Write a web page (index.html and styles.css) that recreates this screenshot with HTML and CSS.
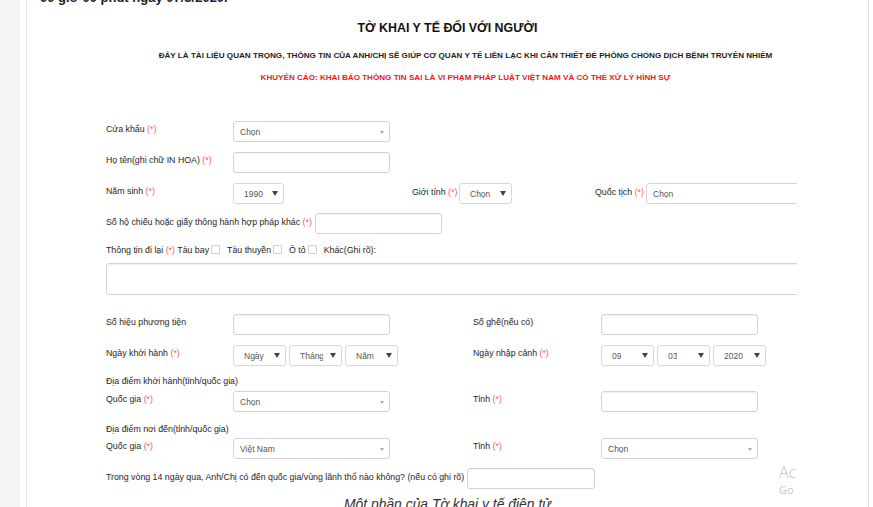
FILE: index.html
```html
<!DOCTYPE html>
<html lang="vi">
<head>
<meta charset="utf-8">
<title>Tờ khai y tế</title>
<link rel="stylesheet" href="styles.css">
</head>
<body>
<div class="page">
  <div class="gutter"></div>
  <div class="sheet">
    <div class="topline">00 giờ 00 phút ngày 07/3/2020.</div>
    <h1 class="title">TỜ KHAI Y TẾ ĐỐI VỚI NGƯỜI</h1>
    <p class="note">ĐÂY LÀ TÀI LIỆU QUAN TRỌNG, THÔNG TIN CỦA ANH/CHỊ SẼ GIÚP CƠ QUAN Y TẾ LIÊN LẠC KHI CẦN THIẾT ĐỂ PHÒNG CHỐNG DỊCH BỆNH TRUYỀN NHIỄM</p>
    <p class="note warn">KHUYẾN CÁO: KHAI BÁO THÔNG TIN SAI LÀ VI PHẠM PHÁP LUẬT VIỆT NAM VÀ CÓ THỂ XỬ LÝ HÌNH SỰ</p>

    <div class="form">
      <div class="row r1">
        <label class="lbl">Cửa khẩu <span class="req">(*)</span></label>
        <div class="sel lg"><span class="val">Chọn</span></div>
      </div>
      <div class="row r2">
        <label class="lbl">Họ tên(ghi chữ IN HOA) <span class="req">(*)</span></label>
        <div class="inp w157"></div>
      </div>
      <div class="row r3">
        <label class="lbl">Năm sinh <span class="req">(*)</span></label>
        <div class="sel sm w51"><span class="val">1990</span></div>
        <label class="lbl-inline gender">Giới tính <span class="req">(*)</span></label>
        <div class="sel sm w53"><span class="val">Chọn</span></div>
        <label class="lbl-inline nation">Quốc tịch <span class="req">(*)</span></label>
        <div class="sel lg wide"><span class="val">Chọn</span></div>
      </div>
      <div class="row r4">
        <label class="lbl-inline">Số hộ chiếu hoặc giấy thông hành hợp pháp khác <span class="req">(*)</span></label>
        <div class="inp w127"></div>
      </div>
      <div class="travel">Thông tin đi lại <span class="req">(*)</span> Tàu bay<span class="cb"></span>Tàu thuyền<span class="cb"></span>Ô tô<span class="cb"></span>Khác(Ghi rõ):</div>
      <div class="area"></div>

      <div class="row r5">
        <div class="half">
          <label class="lbl">Số hiệu phương tiện</label>
          <div class="inp w157"></div>
        </div>
        <div class="half">
          <label class="lbl lbl-r">Số ghế(nếu có)</label>
          <div class="inp w157"></div>
        </div>
      </div>
      <div class="row r6">
        <div class="half">
          <label class="lbl">Ngày khởi hành <span class="req">(*)</span></label>
          <div class="dates">
            <div class="sel sm w53"><span class="val">Ngày</span></div>
            <div class="sel sm w53"><span class="val">Tháng</span></div>
            <div class="sel sm w53"><span class="val">Năm</span></div>
          </div>
        </div>
        <div class="half">
          <label class="lbl lbl-r">Ngày nhập cảnh <span class="req">(*)</span></label>
          <div class="dates">
            <div class="sel sm w53"><span class="val">09</span></div>
            <div class="sel sm w53"><span class="val">03</span></div>
            <div class="sel sm w53"><span class="val">2020</span></div>
          </div>
        </div>
      </div>

      <div class="sub s1">Địa điểm khởi hành(tỉnh/quốc gia)</div>
      <div class="row r7">
        <div class="half">
          <label class="lbl">Quốc gia <span class="req">(*)</span></label>
          <div class="sel lg"><span class="val">Chọn</span></div>
        </div>
        <div class="half">
          <label class="lbl lbl-r">Tỉnh <span class="req">(*)</span></label>
          <div class="inp w157"></div>
        </div>
      </div>

      <div class="sub s2">Địa điểm nơi đến(tỉnh/quốc gia)</div>
      <div class="row r8">
        <div class="half">
          <label class="lbl">Quốc gia <span class="req">(*)</span></label>
          <div class="sel lg"><span class="val">Việt Nam</span></div>
        </div>
        <div class="half">
          <label class="lbl lbl-r">Tỉnh <span class="req">(*)</span></label>
          <div class="sel lg"><span class="val">Chọn</span></div>
        </div>
      </div>
      <div class="row r9">
        <label class="lbl-inline">Trong vòng 14 ngày qua, Anh/Chị có đến quốc gia/vùng lãnh thổ nào không? (nếu có ghi rõ)</label>
        <div class="inp w128"></div>
      </div>
    </div>

    <p class="caption">Một phần của Tờ khai y tế điện tử</p>

    <div class="watermark">
      <div class="wm1">Activate Windows</div>
      <div class="wm2">Go to Settings to activate Windows.</div>
    </div>
  </div>
</div>
</body>
</html>
```

FILE: styles.css
```css
* { box-sizing: border-box; }

html, body {
  margin: 0;
  padding: 0;
  background: #ffffff;
  height: 507px;
  overflow: hidden;
}

body {
  font-family: "Liberation Sans", Arial, sans-serif;
  color: #333;
}

.page {
  display: flex;
  height: 507px;
}

.gutter {
  width: 20px;
  flex: none;
  background: #f4f4f4;
}

.sheet {
  position: relative;
  margin-left: 6px;
  width: 843px;
  flex: none;
  height: 507px;
  border-left: 1px solid #e2e2e2;
  border-right: 1px solid #e2e2e2;
  overflow: hidden;
  background: #fff;
}

.topline {
  margin: -9px 0 0 13px;
  height: 14px;
  font-weight: bold;
  font-size: 13px;
  line-height: 14px;
  color: #222;
  white-space: nowrap;
}

.title {
  margin: 15px 0 0;
  text-align: center;
  font-size: 12.4px;
  line-height: 16px;
  font-weight: bold;
  color: #111;
}

.note {
  margin: 15px 0 0;
  padding-left: 36px;
  text-align: center;
  font-size: 8.1px;
  line-height: 10px;
  font-weight: bold;
  color: #222;
  white-space: nowrap;
}

.note.warn {
  margin-top: 12px;
  color: #f01818;
}

.form {
  margin: 38px 0 0 79px;
  width: 691px;
  overflow: hidden;
  font-size: 8.8px;
  color: #262626;
}

.row {
  display: flex;
  align-items: center;
  height: 21px;
}

.r2 { margin-top: 10px; }
.r3 { margin-top: 10px; }
.r4 { margin-top: 9px; }
.r5 { margin-top: 19px; }
.r6 { margin-top: 10px; }
.r7 { margin-top: 4px; }
.r8 { margin-top: 3px; }
.r9 { margin-top: 9px; }

.half {
  display: flex;
  align-items: center;
  width: 367px;
  flex: none;
}

.lbl {
  width: 127px;
  flex: none;
  padding-bottom: 5px;
  white-space: nowrap;
}

.lbl-r { width: 128px; }

.lbl-inline {
  flex: none;
  padding-bottom: 4px;
  margin-right: 3px;
  white-space: nowrap;
}

.gender { margin-left: 128px; width: 47px; margin-right: 0; }
.nation { margin-left: 83px; width: 51px; margin-right: 0; }

.req { color: #f25c5c; }

.inp, .sel {
  position: relative;
  flex: none;
  height: 21px;
  background: #fff;
  border: 1px solid #d3d3d3;
  border-radius: 3px;
  box-shadow: inset 0 1px 1px rgba(0, 0, 0, 0.06);
}

.w157 { width: 157px; }
.w127 { width: 127px; }
.w128 { width: 128px; }
.w51 { width: 51px; }
.w53 { width: 53px; }

.sel {
  display: flex;
  align-items: center;
  color: #555;
  font-size: 8.5px;
}

.sel.lg {
  width: 157px;
  padding-left: 6px;
  box-shadow: none;
}

.sel.lg.wide { width: 180px; }

.sel.lg::after {
  content: "";
  position: absolute;
  right: 5px;
  top: 9px;
  border-top: 3px solid #a8a8a8;
  border-left: 2px solid transparent;
  border-right: 2px solid transparent;
}

.sel.wide::after { display: none; }

.sel.sm {
  padding-left: 10px;
  padding-right: 18px;
  box-shadow: none;
  border-color: #d8d8d8;
}

.sel.sm .val {
  overflow: hidden;
  white-space: nowrap;
}

.sel.sm::after {
  content: "";
  position: absolute;
  right: 5px;
  top: 7px;
  border-top: 5px solid #444;
  border-left: 3px solid transparent;
  border-right: 3px solid transparent;
}

.dates {
  display: flex;
  gap: 3px;
}

.travel {
  margin-top: 10px;
  height: 12px;
  line-height: 12px;
  white-space: nowrap;
}

.cb {
  display: inline-block;
  vertical-align: -1px;
  width: 9px;
  height: 9px;
  margin: 0 7px 0 2px;
  border: 1px solid #cfcfcf;
  border-radius: 1px;
  background: #fff;
}

.area {
  margin-top: 7px;
  width: 720px;
  height: 32px;
  border: 1px solid #d3d3d3;
  border-radius: 3px;
  box-shadow: inset 0 1px 1px rgba(0, 0, 0, 0.06);
}

.sub {
  height: 12px;
  line-height: 12px;
  white-space: nowrap;
}

.s1 { margin-top: 9px; }
.s2 { margin-top: 11px; }

.caption {
  margin: 7px 0 0;
  text-align: center;
  font-style: italic;
  font-size: 13.9px;
  line-height: 16px;
  color: #333;
  white-space: nowrap;
}

.watermark {
  position: absolute;
  left: 752px;
  top: 462px;
  width: 18px;
  overflow: hidden;
  color: #c4c4c4;
  font-family: "Open Sans", "DejaVu Sans", sans-serif;
  white-space: nowrap;
}

.wm1 {
  font-size: 16px;
  line-height: 20px;
  font-weight: 300;
}

.wm2 {
  font-size: 11px;
  line-height: 14px;
  margin-top: 1px;
}
```
